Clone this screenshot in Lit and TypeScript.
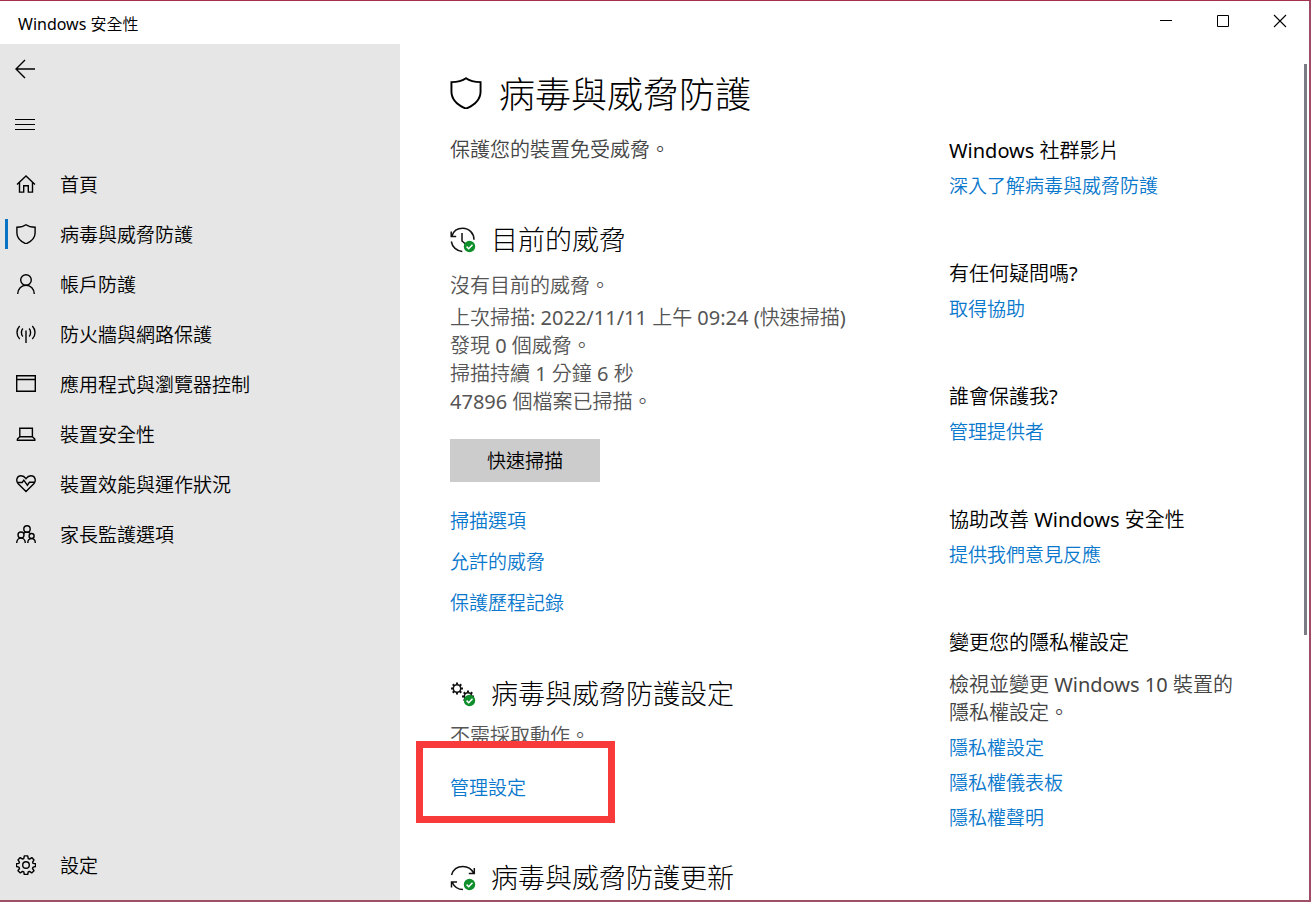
import { LitElement, html, css, svg, nothing } from "lit";
import { customElement, property } from "lit/decorators.js";
import { classMap } from "lit/directives/class-map.js";

const glyphs: Record<string, unknown> = {
  back: svg`<path d="M20 10H1M10 1L1 10l9 9" />`,
  menu: svg`<path d="M0 4.5h20M0 9.5h20M0 14.5h20" stroke-width="1" />`,
  home: svg`<path d="M1 10.5L10 2l9 8.5M3.5 8.5v9.6h4.2v-6.3h4.6v6.3h4.2V8.500" />`,
  shield: svg`<path d="M10 .8C7.700 2.500 4.300 3.200 .9 3.200V9c0 5.200 4 8.600 9.100 10.800C15.100 17.600 19.100 14.200 19.100 9V3.200C15.700 3.200 12.300 2.500 10 .8z" />`,
  person: svg`<circle cx="10" cy="6" r="5.300" /><path d="M1.700 20c0-5 3.700-8.700 8.300-8.700s8.300 3.700 8.300 8.700" />`,
  signal: svg`<path d="M10 6.500V19M6.900 4.500c-2 1.900-2 6.100 0 8M13.100 4.500c2 1.900 2 6.100 0 8M3.700 2c-3.600 3.500-3.600 9.500 0 13M16.300 2c3.600 3.500 3.600 9.500 0 13" />`,
  app: svg`<path d="M.7 1.700h18.600v15.600H.7zM.7 5.500h18.600" />`,
  laptop: svg`<path d="M3.800 4.200h12.600v8.600H3.800zM3.800 12.800L1.400 15v1.200h17.400V15l-2.400-2.200" />`,
  heart: svg`<path d="M10 17.500L2.200 9.700C-.6 6.600 1 1.800 5 1.800c2.200 0 3.800 1.200 5 2.900 1.200-1.700 2.800-2.900 5-2.900 4 0 5.600 4.800 2.800 7.900zM1.800 8.500h4.400l1.600-2.300 3.600 5 2-2.900h4.800" />`,
  family: svg`<circle cx="11" cy="5" r="3.200" /><circle cx="5" cy="11" r="3" /><circle cx="15.600" cy="12" r="2.500" /><path d="M.7 19c0-3 1.900-5 4.300-5s4.300 2 4.300 5M11.800 19c0-2.600 1.500-4.400 3.800-4.400s3.700 1.800 3.700 4.400M7.500 9.500C8.300 8.600 9.500 8.100 11 8.100c1.200 0 2.200.4 3 1.200" />`,
  gear: svg`<circle cx="10" cy="10" r="3.300" /><path d="M8.300.9h3.400l.5 2.600 1.300.6 2.300-1.500 2.200 2.300-1.400 2.200.5 1.300 2.500.4v2.700l-2.500.6-.6 1.400 1.500 2.200-2.300 2.200-2.200-1.500-1.300.6-.5 2.500H8.300l-.5-2.500-1.300-.6-2.200 1.500L2 15.700l1.500-2.200-.6-1.400L.4 11.500V8.800l2.500-.4.5-1.300L2 4.900l2.200-2.300 2.300 1.500 1.300-.6z" stroke-linejoin="round" />`,
  minimize: svg`<path d="M4 9.500h12" stroke-width="1" />`,
  maximize: svg`<path d="M4.500 4.500h11v11h-11z" stroke-width="1" />`,
  close: svg`<path d="M4 4l12 12M16 4L4 16" stroke-width="1.100" />`,
};

const check = svg`<circle cx="19.500" cy="19.500" r="5.700" fill="#0f8f2c" stroke="none" />
  <path d="M16.600 19.600l2.100 2.100 3.800-4" stroke="#fff" stroke-width="1.500" />`;

const gearTeeth = (cx: number, cy: number, r: number) =>
  Array.from({ length: 8 }, (_, i) => {
    const a = (i * Math.PI) / 4;
    const c = Math.cos(a);
    const s = Math.sin(a);
    return svg`<path d="M${cx + r * c} ${cy + r * s}L${cx + (r + 2) * c} ${cy + (r + 2) * s}" stroke-width="2" />`;
  });

const sectionGlyphs: Record<string, unknown> = {
  history: svg`<path d="M1.200 4.500v5h5M1.800 9.200C3.300 4.300 7.500 1.300 12.700 1.300c6.500 0 11.300 5 11.300 11.400M1.300 14.500c.9 5.300 5.400 9.700 11 9.900M12 6v8l3.500 3" />${check}`,
  gears: svg`<circle cx="7" cy="7.500" r="3.700" />${gearTeeth(7, 7.5, 4)}<circle cx="18" cy="15.500" r="3.700" />${gearTeeth(18, 15.5, 4)}${check}`,
  refresh: svg`<path d="M1.500 10C3 4.800 7.500 1.500 13 1.500c4.500 0 8.500 2.500 10.500 6.500M24.300 3v5.500h-5.500M1.500 22.500V17h5.500M2.300 17.500C4.300 22 8.200 24.500 13 24.500" />${check}`,
};

@customElement("ui-icon")
class UiIcon extends LitElement {
  static styles = css`
    :host { display: block; flex: none; width: 20px; height: 20px; }
    :host([large]) { width: 32px; height: 32px; }
    svg { display: block; width: 100%; height: 100%; fill: none; stroke: currentColor; stroke-width: 1.4; }
    :host([large]) svg { stroke-width: 1.2; }
  `;
  @property() name = "";
  render() {
    return html`<svg viewBox="0 0 20 20" aria-hidden="true">${glyphs[this.name] ?? nothing}</svg>`;
  }
}

@customElement("section-title")
class SectionTitle extends LitElement {
  static styles = css`
    :host { display: block; }
    .title { display: flex; align-items: center; gap: 15px; margin: 0; font-family: "Noto Sans", "Noto Sans CJK TC", sans-serif; font-size: 27px; line-height: 36px; font-weight: 300; color: #000; }
    .glyph { flex: none; width: 26px; height: 26px; fill: none; stroke: #111; stroke-width: 1.5; }
  `;
  @property() icon = "";
  @property() text = "";
  render() {
    return html`<h2 class="title">
      <svg class="glyph" viewBox="0 0 26 26" aria-hidden="true">${sectionGlyphs[this.icon] ?? nothing}</svg>
      <span>${this.text}</span>
    </h2>`;
  }
}

const navItems = [
  { icon: "home", label: "首頁" },
  { icon: "shield", label: "病毒與威脅防護", current: true },
  { icon: "person", label: "帳戶防護" },
  { icon: "signal", label: "防火牆與網路保護" },
  { icon: "app", label: "應用程式與瀏覽器控制" },
  { icon: "laptop", label: "裝置安全性" },
  { icon: "heart", label: "裝置效能與運作狀況" },
  { icon: "family", label: "家長監護選項" },
];

const helpGroups = [
  { title: "Windows 社群影片", links: ["深入了解病毒與威脅防護"] },
  { title: "有任何疑問嗎?", links: ["取得協助"] },
  { title: "誰會保護我?", links: ["管理提供者"] },
  { title: "協助改善 Windows 安全性", links: ["提供我們意見反應"] },
  {
    title: "變更您的隱私權設定",
    text: "檢視並變更 Windows 10 裝置的隱私權設定。",
    links: ["隱私權設定", "隱私權儀表板", "隱私權聲明"],
  },
];

@customElement("app-root")
class AppRoot extends LitElement {
  static styles = css`
    :host {
      display: block;
      font-family: "Noto Sans", "Noto Sans CJK TC DemiLight", "Noto Sans CJK TC", sans-serif;
      font-weight: 400;
      color: #000;
    }
    * { box-sizing: border-box; }
    button { border: 0; padding: 0; background: none; color: inherit; font: inherit; }
    a { text-decoration: none; color: inherit; }
    h1, h3, p { margin: 0; font-weight: inherit; }

    .window {
      display: flex;
      flex-direction: column;
      min-height: 100vh;
      background: #fff;
      border-top: 1px solid #a5304a;
      border-right: 2px solid #a04a66;
      border-bottom: 2px solid #9f5066;
    }
    .titlebar { display: flex; justify-content: space-between; height: 43px; }
    .caption { padding-left: 18px; font-size: 16px; line-height: 46px; }
    .controls { display: flex; padding-right: 1px; }
    .control { display: flex; align-items: center; justify-content: center; width: 57px; height: 40px; }

    .body { display: flex; flex: 1; }
    .sidebar { display: flex; flex-direction: column; flex: none; width: 400px; padding-bottom: 10px; background: #e6e6e6; }
    .tool { display: flex; align-items: center; width: 60px; height: 50px; padding-left: 15px; }
    .menu { margin: 6px 0 9px; }
    .nav { flex: 1; }
    .item { display: flex; align-items: center; gap: 24px; height: 50px; padding-left: 16px; font-size: 19px; }
    .current { position: relative; }
    .current::before { content: ""; position: absolute; left: 5px; top: 10px; width: 3px; height: 30px; background: #0a74c4; }

    .content { display: grid; grid-template-columns: minmax(0, 1fr) 351px; flex: 1; padding-left: 50px; }
    .main { padding-top: 27px; }
    .heading { display: flex; align-items: flex-start; gap: 17px; }
    .heading ui-icon { margin-top: 6px; }
    .title { font-family: "Noto Sans", "Noto Sans CJK TC", sans-serif; font-size: 36px; line-height: 48px; font-weight: 300; }
    .text { font-size: 20px; line-height: 28px; color: #555; }
    .lead { margin: 17px 0 58px; color: #444; }
    .status { margin-top: 14px; }
    .details { margin-top: 4px; }
    .scan { display: block; width: 150px; height: 43px; margin: 23px 0 19px; padding-bottom: 2px; background: #ccc; font-size: 19px; }
    .link { display: block; width: max-content; font-size: 19px; line-height: 41px; color: #0a78cc; }
    .settings { margin-top: 52px; }
    .settings-status { margin-top: 10px; }
    .marked { position: relative; width: max-content; margin: 18px 0 51px; }
    .mark { position: absolute; left: -34px; top: -27px; width: 199px; height: 82px; border: 7px solid #f93a3a; pointer-events: none; }

    .aside { display: flex; flex-direction: column; gap: 56px; padding-top: 93px; }
    .subtitle { font-size: 20px; line-height: 28px; margin-bottom: 4px; }
    .note { max-width: 296px; margin: 14px 0 4px; color: #444; }
    .help-link { line-height: 35px; }

    .scrollbar { flex: none; width: 9px; padding: 20px 0; }
    .thumb { width: 3px; height: 70%; margin-left: 4px; background: #7b7b86; }
  `;

  render() {
    return html`
      <div class="window" lang="zh-Hant">
        <header class="titlebar">
          <span class="caption">Windows 安全性</span>
          <div class="controls">
            <button class="control" aria-label="最小化"><ui-icon name="minimize"></ui-icon></button>
            <button class="control" aria-label="最大化"><ui-icon name="maximize"></ui-icon></button>
            <button class="control" aria-label="關閉"><ui-icon name="close"></ui-icon></button>
          </div>
        </header>
        <div class="body">
          <aside class="sidebar">
            <button class="tool" aria-label="上一頁"><ui-icon name="back"></ui-icon></button>
            <button class="tool menu" aria-label="選單"><ui-icon name="menu"></ui-icon></button>
            <nav class="nav">
              ${navItems.map(
                (n) => html`<a href="#" class=${classMap({ item: true, current: !!n.current })}>
                  <ui-icon name=${n.icon}></ui-icon><span>${n.label}</span>
                </a>`
              )}
            </nav>
            <a href="#" class="item"><ui-icon name="gear"></ui-icon><span>設定</span></a>
          </aside>
          <div class="content">
            <main class="main">
              <div class="heading">
                <ui-icon name="shield" large></ui-icon>
                <h1 class="title">病毒與威脅防護</h1>
              </div>
              <p class="text lead">保護您的裝置免受威脅。</p>

              <section-title icon="history" text="目前的威脅"></section-title>
              <p class="text status">沒有目前的威脅。</p>
              <p class="text details">
                上次掃描: 2022/11/11 上午 09:24 (快速掃描)<br />發現 0 個威脅。<br />掃描持續 1 分鐘 6 秒<br />47896 個檔案已掃描。
              </p>
              <button class="scan">快速掃描</button>
              <a href="#" class="link">掃描選項</a>
              <a href="#" class="link">允許的威脅</a>
              <a href="#" class="link">保護歷程記錄</a>

              <section-title class="settings" icon="gears" text="病毒與威脅防護設定"></section-title>
              <p class="text settings-status">不需採取動作。</p>
              <div class="marked">
                <a href="#" class="link">管理設定</a>
                <span class="mark"></span>
              </div>

              <section-title icon="refresh" text="病毒與威脅防護更新"></section-title>
            </main>
            <aside class="aside">
              ${helpGroups.map(
                (g) => html`<section>
                  <h3 class="subtitle">${g.title}</h3>
                  ${g.text ? html`<p class="text note">${g.text}</p>` : nothing}
                  ${g.links.map((l) => html`<a href="#" class="link help-link">${l}</a>`)}
                </section>`
              )}
            </aside>
          </div>
          <div class="scrollbar"><div class="thumb"></div></div>
        </div>
      </div>
    `;
  }
}
